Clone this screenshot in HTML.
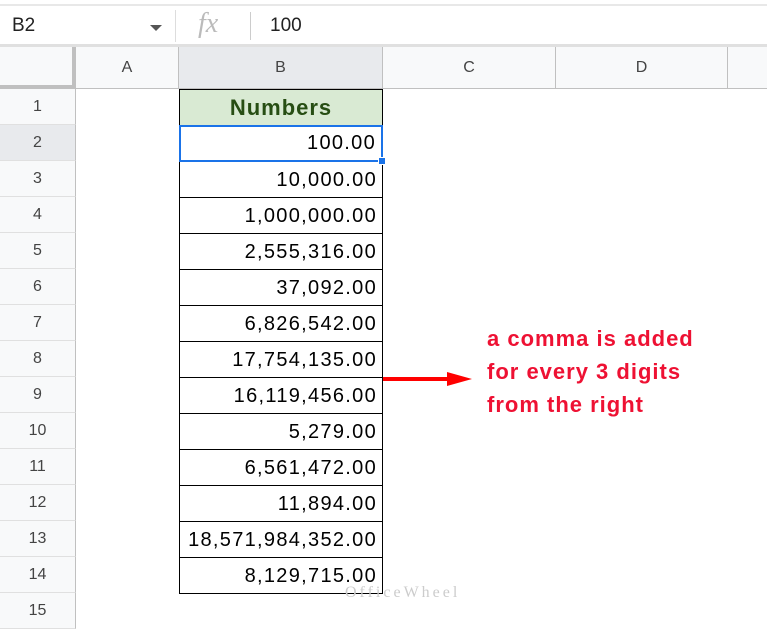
<!DOCTYPE html>
<html><head><style>
body{margin:0;width:767px;height:632px;overflow:hidden;background:#fff;font-family:"Liberation Sans",Arial,sans-serif;position:relative}
.a{position:absolute;box-sizing:border-box}
.rh{position:absolute;left:0;width:76px;height:36px;background:#f8f9fa;border-bottom:1px solid #e0e0e0;border-right:1px solid #c0c0c0;text-align:center;line-height:36px;font-size:16px;color:#444;box-sizing:border-box}
.cell{position:absolute;left:179px;width:204px;height:37px;border:1px solid #000;text-align:right;padding-right:5px;line-height:36px;font-size:20px;letter-spacing:1.3px;color:#000;box-sizing:border-box}
.ch{position:absolute;top:47px;height:42px;background:#f8f9fa;border-right:1px solid #c0c0c0;border-bottom:1px solid #c0c0c0;text-align:center;line-height:42px;font-size:16px;color:#444;box-sizing:border-box}
</style></head><body>
<div class="a" style="left:0;top:4px;width:767px;height:2px;background:#e8e8e8"></div>
<div class="a" style="left:0;top:44px;width:767px;height:3px;background:#e0e0e0"></div>
<div class="a" style="left:12px;top:15px;font-size:19px;color:#222">B2</div>
<div class="a" style="left:150px;top:25px;width:0;height:0;border-left:6px solid transparent;border-right:6px solid transparent;border-top:6px solid #555"></div>
<div class="a" style="left:175px;top:10px;width:1px;height:32px;background:#ddd"></div>
<div class="a" style="left:198px;top:8px;font-size:28px;font-style:italic;color:#bbb;font-family:'Liberation Serif',serif">fx</div>
<div class="a" style="left:250px;top:12px;width:1px;height:28px;background:#ccc"></div>
<div class="a" style="left:270px;top:15px;font-size:19px;color:#222">100</div>
<div class="ch" style="left:0;width:76px;border-right:4px solid #c0c0c0;border-bottom:4px solid #c0c0c0"></div>
<div class="ch" style="left:76px;width:103px">A</div>
<div class="ch" style="left:179px;width:204px;background:#e8eaed">B</div>
<div class="ch" style="left:383px;width:173px">C</div>
<div class="ch" style="left:556px;width:172px">D</div>
<div class="ch" style="left:728px;width:39px;border-right:none"></div>
<div class="rh" style="top:89px">1</div>
<div class="rh" style="top:125px;background:#e8eaed">2</div>
<div class="rh" style="top:161px">3</div>
<div class="rh" style="top:197px">4</div>
<div class="rh" style="top:233px">5</div>
<div class="rh" style="top:269px">6</div>
<div class="rh" style="top:305px">7</div>
<div class="rh" style="top:341px">8</div>
<div class="rh" style="top:377px">9</div>
<div class="rh" style="top:413px">10</div>
<div class="rh" style="top:449px">11</div>
<div class="rh" style="top:485px">12</div>
<div class="rh" style="top:521px">13</div>
<div class="rh" style="top:557px">14</div>
<div class="rh" style="top:593px">15</div>
<div class="cell" style="top:89px;background:#d9ead3;text-align:center;padding:0;font-weight:bold;color:#274e13;font-size:22px;letter-spacing:1px">Numbers</div>
<div class="cell" style="top:161px">10,000.00</div>
<div class="cell" style="top:197px">1,000,000.00</div>
<div class="cell" style="top:233px">2,555,316.00</div>
<div class="cell" style="top:269px">37,092.00</div>
<div class="cell" style="top:305px">6,826,542.00</div>
<div class="cell" style="top:341px">17,754,135.00</div>
<div class="cell" style="top:377px">16,119,456.00</div>
<div class="cell" style="top:413px">5,279.00</div>
<div class="cell" style="top:449px">6,561,472.00</div>
<div class="cell" style="top:485px">11,894.00</div>
<div class="cell" style="top:521px">18,571,984,352.00</div>
<div class="cell" style="top:557px">8,129,715.00</div>
<div class="cell" style="top:125px;border:2px solid #1a73e8;line-height:33px">100.00</div>
<div class="a" style="left:378px;top:157px;width:8px;height:8px;background:#1a73e8;border:1px solid #fff"></div>
<div class="a" style="left:383px;top:377px;width:65px;height:4px;background:#f00"></div>
<div class="a" style="left:447px;top:372px;width:0;height:0;border-top:7px solid transparent;border-bottom:7px solid transparent;border-left:25px solid #f00"></div>
<div class="a" style="left:487px;top:322px;font-size:22px;letter-spacing:1px;font-weight:bold;color:#ee1133;line-height:33px">a comma is added<br>for every 3 digits<br>from the right</div>
<div class="a" style="left:345px;top:584px;font-size:16px;color:#ccc;letter-spacing:3px;font-family:'Liberation Serif',serif">OfficeWheel</div>
</body></html>
